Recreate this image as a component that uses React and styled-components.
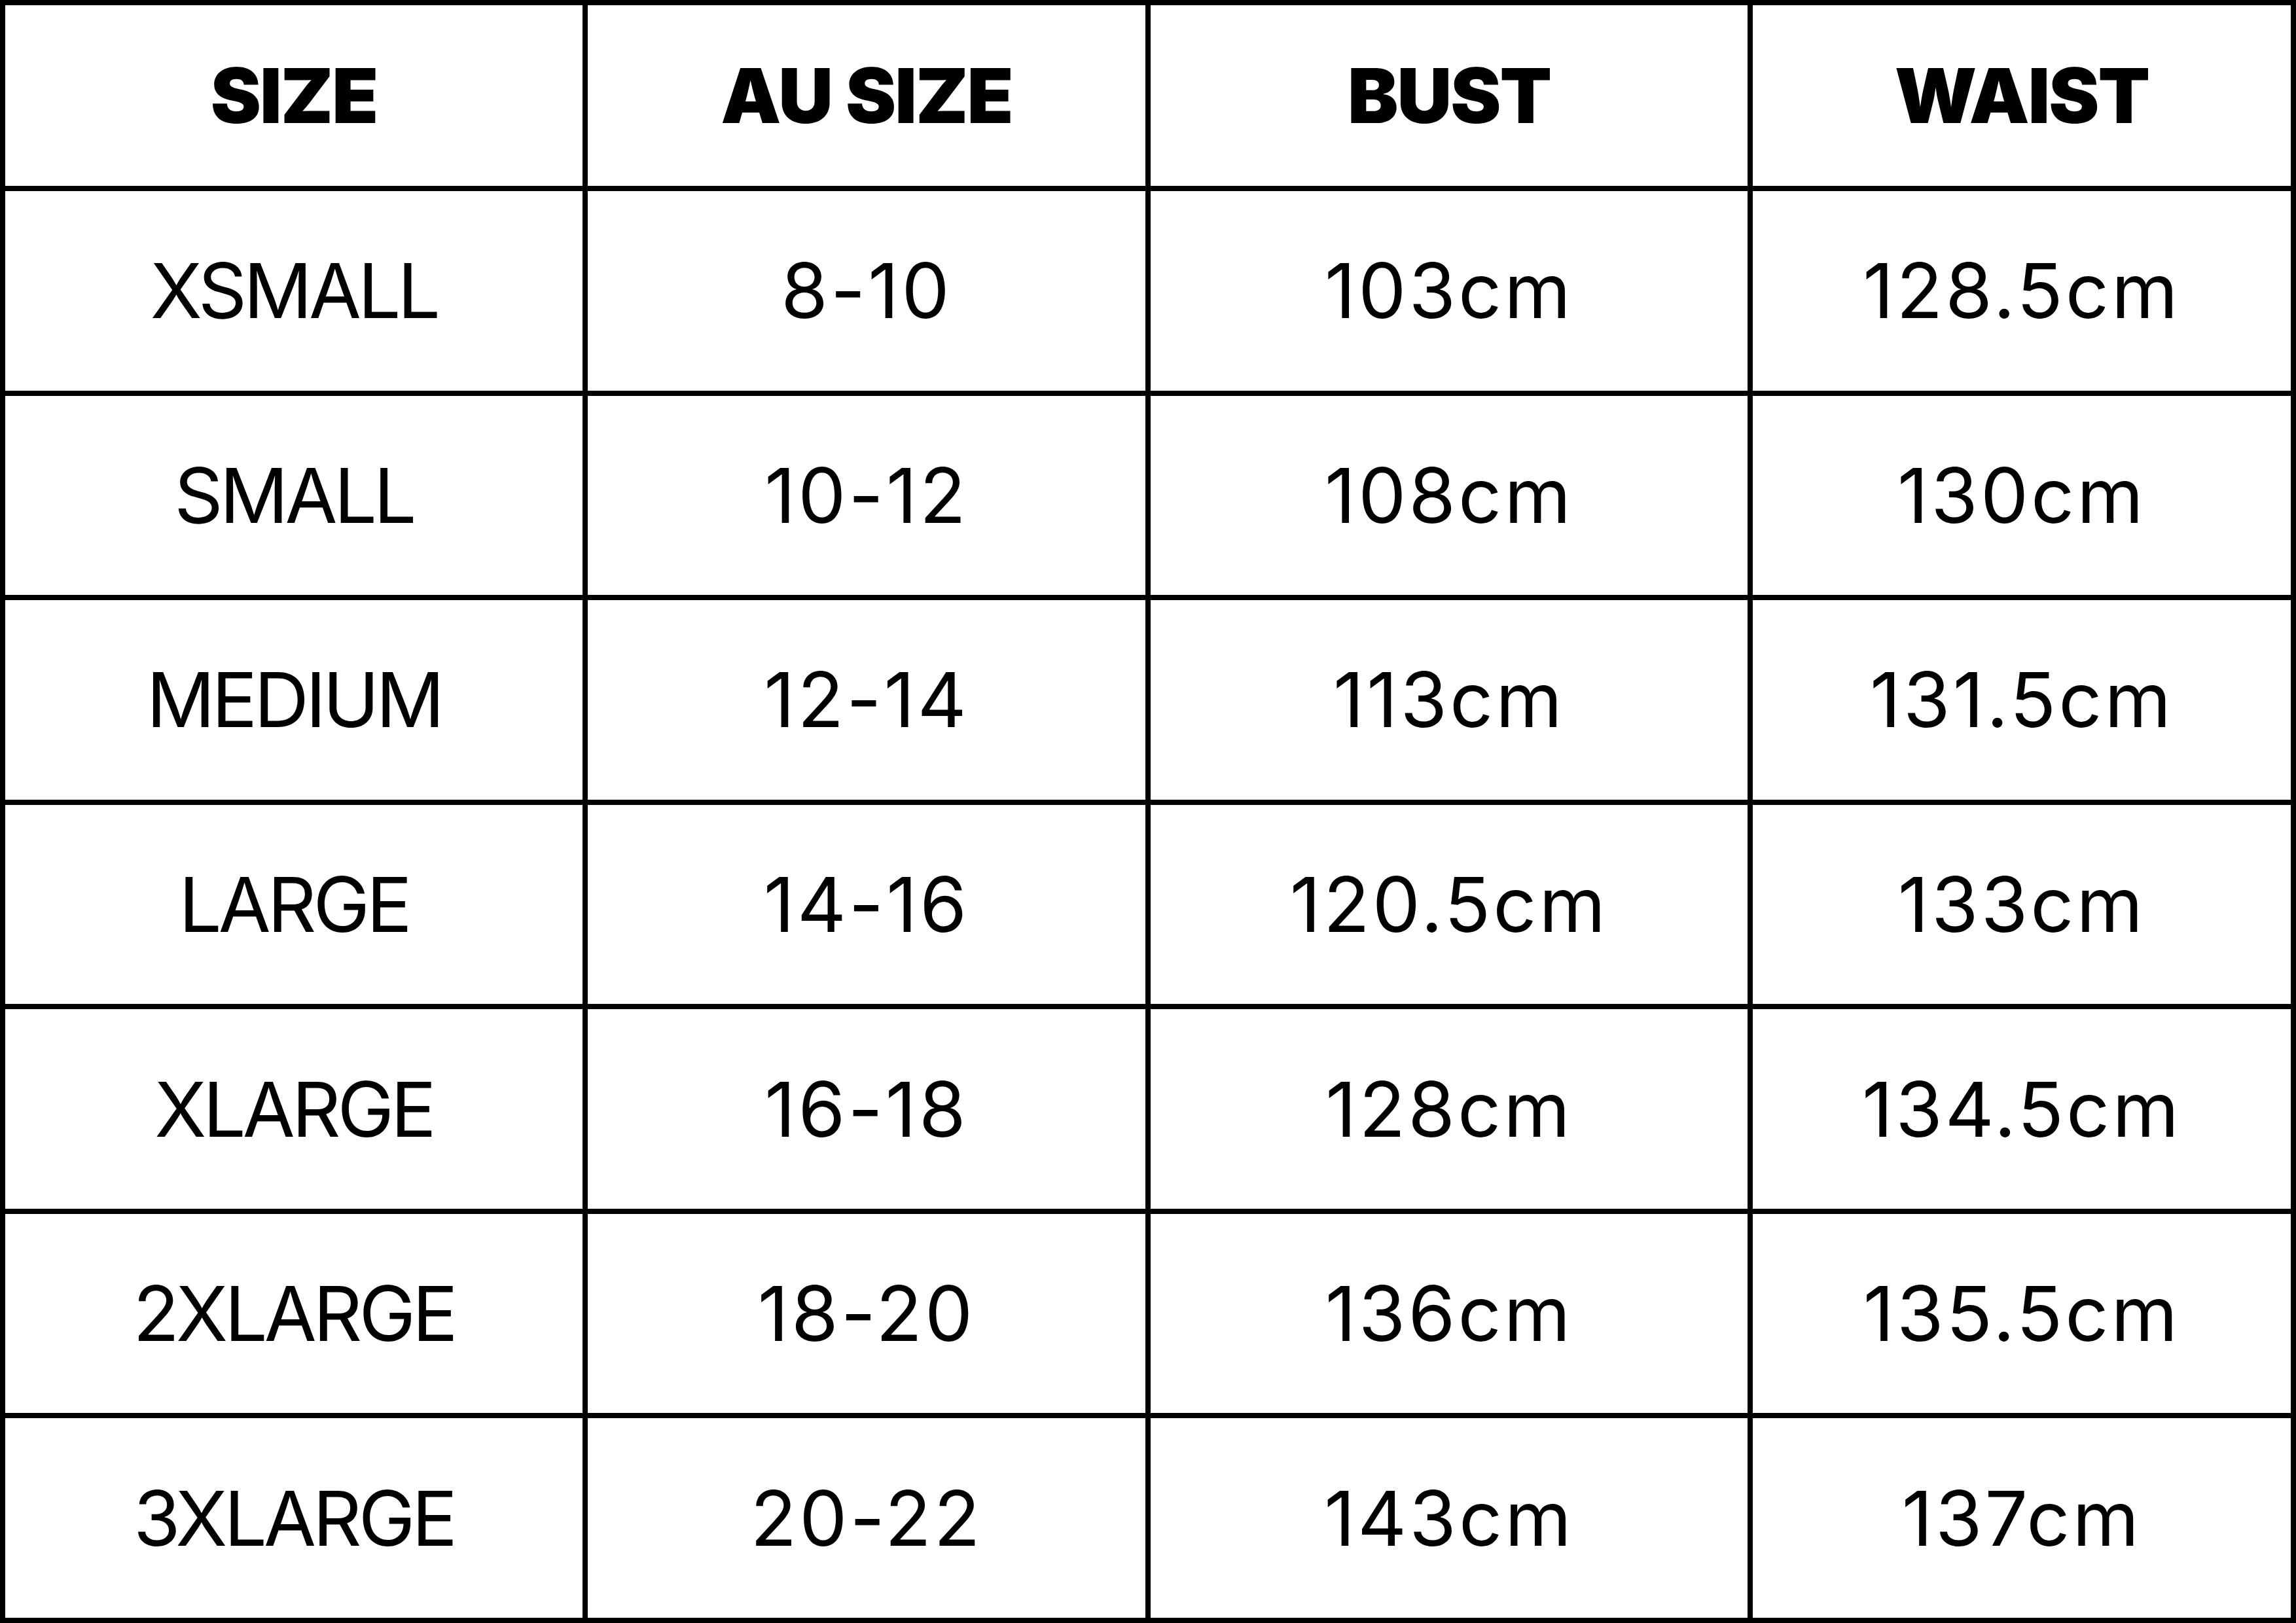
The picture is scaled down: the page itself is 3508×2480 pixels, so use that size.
import React from 'react';
import styled, { createGlobalStyle } from 'styled-components';

const GlobalStyle = createGlobalStyle`
  html, body {
    margin: 0;
    padding: 0;
    background: #ffffff;
  }
  * {
    box-sizing: border-box;
  }
`;

const Chart = styled.div`
  display: grid;
  grid-template-columns: 882px 852px 912px 822px;
  grid-template-rows: 276px repeat(7, 1fr);
  gap: 8px;
  padding: 8px;
  width: 3508px;
  height: 2480px;
  background: #000000;
  font-family: Inter, "Noto Sans", sans-serif;
  color: #000000;
`;

const Cell = styled.div`
  display: flex;
  align-items: center;
  justify-content: center;
  background: #ffffff;
  font-size: 116px;
  line-height: 1;
  font-weight: 400;
  letter-spacing: ${(p) => (p.$num ? '4px' : '-5px')};
  white-space: nowrap;
`;

const HeadCell = styled(Cell)`
  font-weight: 900;
  letter-spacing: -2px;
`;

const headers = ['SIZE', 'AU SIZE', 'BUST', 'WAIST'];

const rows = [
  ['XSMALL', '8-10', '103cm', '128.5cm'],
  ['SMALL', '10-12', '108cm', '130cm'],
  ['MEDIUM', '12-14', '113cm', '131.5cm'],
  ['LARGE', '14-16', '120.5cm', '133cm'],
  ['XLARGE', '16-18', '128cm', '134.5cm'],
  ['2XLARGE', '18-20', '136cm', '135.5cm'],
  ['3XLARGE', '20-22', '143cm', '137cm'],
];

const App = () => {
  return (
    <>
      <GlobalStyle />
      <Chart>
        {headers.map((h) => (
          <HeadCell key={h}>{h}</HeadCell>
        ))}
        {rows.map((row) =>
          row.map((value, i) => (
            <Cell key={row[0] + i} $num={i > 0}>
              {value}
            </Cell>
          ))
        )}
      </Chart>
    </>
  );
};

export default App;
